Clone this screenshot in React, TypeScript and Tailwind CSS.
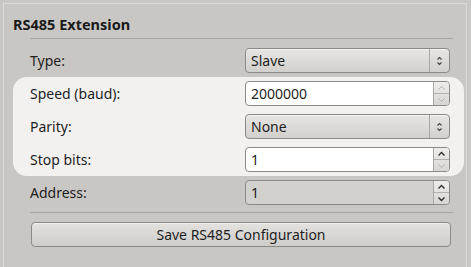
import React from "react";

const font = { fontFamily: '"Noto Sans", "DejaVu Sans", sans-serif' };

function Updown() {
  return (
    <svg width="7" height="10" viewBox="0 0 7 10" className="text-[#444]">
      <path d="M1.5 3.5 L3.5 1.5 L5.5 3.5" fill="none" stroke="currentColor" strokeWidth="1.1" />
      <path d="M1.5 6.5 L3.5 8.5 L5.5 6.5" fill="none" stroke="currentColor" strokeWidth="1.1" />
    </svg>
  );
}

function Chevron({ up, dim }: { up?: boolean; dim?: boolean }) {
  return (
    <svg width="9" height="6" viewBox="0 0 9 6" className={dim ? "text-[#b4b2af]" : "text-[#2e2e2e]"}>
      <path
        d={up ? "M1.5 4.5 L4.5 1.5 L7.5 4.5" : "M1.5 1.5 L4.5 4.5 L7.5 1.5"}
        fill="none"
        stroke="currentColor"
        strokeWidth={dim ? 1 : 1.4}
      />
    </svg>
  );
}

function Combo({ value }: { value: string }) {
  return (
    <div className="flex h-[25px] w-[205px] items-center rounded-[4px] border border-[#8c8a87] bg-gradient-to-b from-[#e8e6e3] to-[#d2d0cd] shadow-[inset_0_1px_0_#f4f3f1]">
      <span className="flex-1 pl-[5px] text-[14px] leading-none text-[#1e1e1e]">{value}</span>
      <div className="flex h-full w-[20px] items-center justify-center border-l border-[#a9a7a4]">
        <Updown />
      </div>
    </div>
  );
}

function Spin({
  value,
  upDim,
  downDim,
  disabled,
}: {
  value: string;
  upDim?: boolean;
  downDim?: boolean;
  disabled?: boolean;
}) {
  return (
    <div
      className={`flex h-[25px] w-[205px] items-stretch rounded-[4px] border border-[#8c8a87] ${
        disabled ? "bg-[#d3d1ce]" : "bg-white"
      }`}
    >
      <span className="flex flex-1 items-center pl-[5px] text-[14px] leading-none text-[#1e1e1e]">{value}</span>
      <div className="flex w-[16px] flex-col border-l border-[#a9a7a4] bg-gradient-to-b from-[#eeedeb] to-[#d8d6d3] rounded-r-[3px]">
        <div className="flex flex-1 items-center justify-center border-b border-[#b3b1ae]">
          <Chevron up dim={upDim} />
        </div>
        <div className="flex flex-1 items-center justify-center">
          <Chevron dim={downDim} />
        </div>
      </div>
    </div>
  );
}

function Row({ label, children }: { label: string; children: React.ReactNode }) {
  return (
    <div className="flex h-[33px] items-center pl-[17px] pr-[14px]">
      <span className="flex-1 text-[14px] text-[#1e1e1e]">{label}</span>
      {children}
    </div>
  );
}

export default function App() {
  return (
    <div style={font} className="h-[267px] w-[471px] overflow-hidden bg-[#c9c7c4] pl-[3px] pr-[4px] pt-[3px]">
      <div className="h-[300px] border-l border-r border-t border-[#dcdad7]">
        <div className="pl-[9px] pt-[12px] text-[14.5px] font-bold leading-[16px] text-[#1a1a1a]">RS485 Extension</div>
        <div className="ml-[26px] mt-[6px] h-px w-[423px] bg-[#a6a4a1]" />
        <div className="ml-[9px] mt-[5px] w-[451px]">
          <Row label="Type:">
            <Combo value="Slave" />
          </Row>
          <div className="rounded-[14px] bg-[#f2f1f0]">
            <Row label="Speed (baud):">
              <Spin value="2000000" upDim downDim />
            </Row>
            <Row label="Parity:">
              <Combo value="None" />
            </Row>
            <Row label="Stop bits:">
              <Spin value="1" downDim />
            </Row>
          </div>
          <Row label="Address:">
            <Spin value="1" disabled />
          </Row>
        </div>
        <div className="ml-[26px] mt-[3px] h-px w-[423px] bg-[#a6a4a1]" />
        <button className="ml-[27px] mt-[9px] flex h-[25px] w-[420px] items-center justify-center rounded-[4px] border border-[#8c8a87] bg-gradient-to-b from-[#e4e2df] to-[#cfcdca] text-[14px] text-[#1e1e1e] shadow-[inset_0_1px_0_#f0efed]">
          Save RS485 Configuration
        </button>
      </div>
    </div>
  );
}
